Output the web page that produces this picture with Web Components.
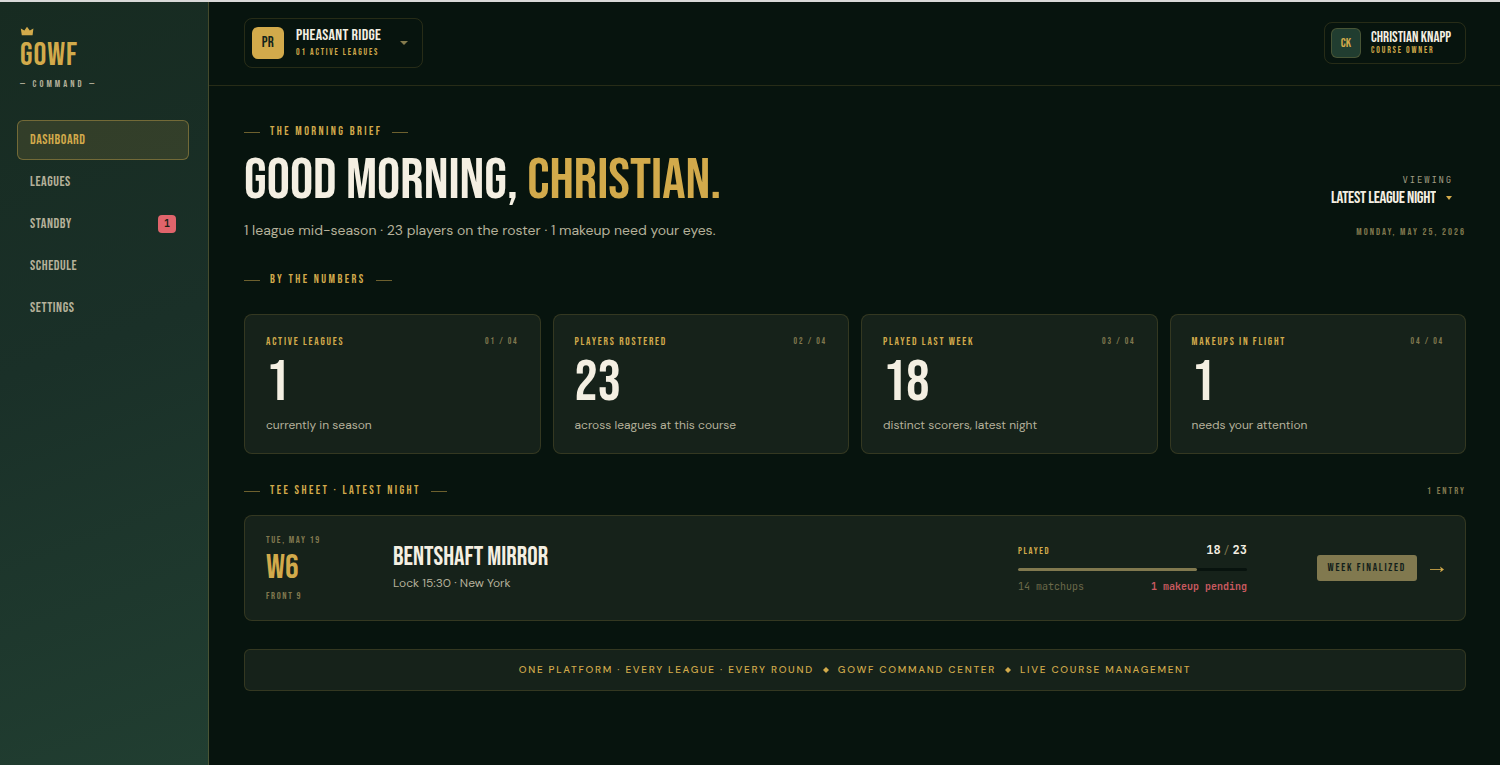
<!DOCTYPE html>
<html lang="en">
<head>
<meta charset="utf-8">
<title>GOWF Command</title>
<style>
  :root {
    --bg: #07140e;
    --panel: #16221a;
    --line: rgba(212, 172, 77, .16);
    --gold: #d2aa4b;
    --cream: #f4efe2;
    --sand: #b5b19a;
    --olive: #81794f;
    --dim: #6d6a4a;
    --rose: #e0646b;
    --display: "Bebas Neue", "Roboto Condensed", "Liberation Sans", sans-serif;
    --text: "DM Sans", Inter, "Liberation Sans", sans-serif;
    --mono: "JetBrains Mono", "Liberation Mono", monospace;
  }
  body { margin: 0; background: var(--bg); color: var(--cream); font-family: var(--display); }
</style>
</head>
<body>
<gowf-app></gowf-app>
<script>
const define = (name, html, setup) => {
  const template = document.createElement('template');
  template.innerHTML = html;
  customElements.define(name, class extends HTMLElement {
    constructor() {
      super();
      this.attachShadow({ mode: 'open' }).append(template.content.cloneNode(true));
    }
    connectedCallback() { if (setup) setup(this, this.shadowRoot); }
  });
};

define('gowf-logo', `
  <style>
    :host { display: block; color: var(--gold); }
    svg { display: block; margin-bottom: 4px; }
    .name { font-size: 32px; line-height: 32px; letter-spacing: .03em; }
    .sub { margin-top: 5px; font-size: 10px; line-height: 14px; letter-spacing: .3em; color: var(--sand); white-space: nowrap; }
  </style>
  <svg width="14" height="10" viewBox="0 0 14 10" aria-hidden="true">
    <path fill="currentColor" d="M.8 2.6 4.4 4.6 7 .8 9.8 4.6 13.4 2.6 12.6 9.2H1.8Z"/>
  </svg>
  <div class="name"><span>GOWF</span></div>
  <div class="sub"><span>— COMMAND —</span></div>`);

define('nav-item', `
  <style>
    :host { display: block; }
    a { box-sizing: border-box; display: flex; align-items: center; justify-content: space-between; height: 40px; padding: 0 12px; border: 1px solid transparent; border-radius: 6px; color: var(--sand); font-size: 14px; line-height: 20px; letter-spacing: .04em; text-decoration: none; }
    :host([current]) a { color: var(--gold); background: rgba(212, 172, 77, .14); border-color: rgba(212, 172, 77, .4); }
  </style>
  <a href="#"><span><slot></slot></span><slot name="badge"></slot></a>`,
  (el, root) => { if (el.hasAttribute('current')) root.querySelector('a').setAttribute('aria-current', 'page'); });

define('count-badge', `
  <style>:host { display: block; min-width: 18px; border-radius: 4px; background: var(--rose); color: #1a2018; text-align: center; font: 700 10px/18px var(--mono); letter-spacing: 0; }</style>
  <slot></slot>`);

define('side-bar', `
  <style>
    :host { display: block; box-sizing: border-box; padding: 24px 19px 24px 17px; border-right: 1px solid rgba(212, 172, 77, .24); background: linear-gradient(160deg, #172b21 0%, #1a3028 45%, #213e31 100%); }
    gowf-logo { margin: 0 0 29px 3px; }
    nav { display: grid; gap: 2px; }
  </style>
  <gowf-logo></gowf-logo>
  <nav aria-label="Main">
    <nav-item current>DASHBOARD</nav-item>
    <nav-item>LEAGUES</nav-item>
    <nav-item>STANDBY<count-badge slot="badge">1</count-badge></nav-item>
    <nav-item>SCHEDULE</nav-item>
    <nav-item>SETTINGS</nav-item>
  </nav>`);

define('id-tile', `
  <style>
    :host { display: grid; place-items: center; box-sizing: border-box; width: 32px; height: 32px; border-radius: 6px; background: var(--gold); color: #14241b; font-size: 15px; line-height: 16px; letter-spacing: .02em; }
    :host([quiet]) { width: 30px; height: 30px; border: 1px solid rgba(212, 172, 77, .22); background: #213d30; color: var(--gold); font-size: 13px; }
  </style>
  <span><slot></slot></span>`);

define('identity-button', `
  <style>
    :host { display: block; }
    button { display: flex; align-items: center; gap: 12px; padding: 7px; border: 1px solid var(--line); border-radius: 8px; background: none; color: var(--cream); font: inherit; text-align: left; cursor: pointer; }
    .who { display: grid; gap: 1px; padding-top: 1px; }
    .name { font-size: 16px; line-height: 18px; letter-spacing: .02em; }
    .role { font-size: 9px; line-height: 14px; letter-spacing: .2em; color: var(--gold); }
    .caret { width: 8px; margin: 0 7px; }
    :host([compact]) button { gap: 10px; padding: 5px 14px 5px 6px; }
    :host([compact]) .who { gap: 0; padding-top: 2px; }
    :host([compact]) .name { font-size: 15px; line-height: 14px; letter-spacing: 0; }
    :host([compact]) .role { line-height: 12px; }
    :host([compact]) .caret { display: none; }
  </style>
  <button type="button">
    <slot name="tile"></slot>
    <span class="who"><span class="name"><slot></slot></span><span class="role"><slot name="role"></slot></span></span>
    <svg class="caret" width="8" height="4" viewBox="0 0 8 4" aria-hidden="true"><path d="M0 0h8L4 4z" fill="#857b4d"/></svg>
  </button>`);

define('top-bar', `
  <style>:host { display: flex; align-items: center; justify-content: space-between; box-sizing: border-box; height: 84px; padding: 0 34px 2px 35px; border-bottom: 1px solid var(--line); }</style>
  <identity-button><id-tile slot="tile">PR</id-tile>PHEASANT RIDGE<span slot="role">01 ACTIVE LEAGUES</span></identity-button>
  <identity-button compact><id-tile slot="tile" quiet>CK</id-tile>CHRISTIAN KNAPP<span slot="role">COURSE OWNER</span></identity-button>`);

define('section-label', `
  <style>
    :host { display: flex; align-items: center; justify-content: space-between; }
    .label { display: flex; align-items: center; gap: 10px; color: var(--gold); font-size: 12px; line-height: 16px; letter-spacing: .2em; }
    .label::before, .label::after { content: ""; width: 16px; height: 1px; background: rgba(212, 172, 77, .5); }
    h2 { margin: 0; font: inherit; }
    .note { color: var(--olive); font-size: 10px; line-height: 16px; letter-spacing: .2em; }
  </style>
  <div class="label"><h2><slot></slot></h2></div><span class="note"><slot name="note"></slot></span>`);

define('night-picker', `
  <style>
    :host { display: flex; flex-direction: column; align-items: flex-end; }
    label { padding-right: 13px; font: 9px/12px var(--mono); letter-spacing: .2em; color: #a19d82; }
    .field { display: flex; align-items: center; gap: 10px; margin: 2px 14px 16px 0; }
    select { appearance: none; height: 20px; margin: 0; padding: 0; border: 0; background: none; color: var(--cream); font: 17px/20px var(--display); letter-spacing: -.02em; cursor: pointer; }
    time { color: var(--olive); font-size: 10px; line-height: 16px; letter-spacing: .2em; }
  </style>
  <label for="night">VIEWING</label>
  <div class="field">
    <select id="night"><option>LATEST LEAGUE NIGHT</option></select>
    <svg width="6" height="4" viewBox="0 0 6 4" aria-hidden="true"><path d="M0 0h6L3 4z" fill="#d2aa4b"/></svg>
  </div>
  <time datetime="2026-05-25">MONDAY, MAY 25, 2026</time>`);

define('hero-head', `
  <style>
    :host { display: flex; align-items: flex-end; justify-content: space-between; }
    h1 { margin: 12px 0 10px; font-size: 58px; line-height: 58px; font-weight: 400; }
    em { font-style: normal; color: var(--gold); }
    p { margin: 0; font: 14px/20px var(--text); color: var(--sand); }
  </style>
  <div>
    <section-label>THE MORNING BRIEF</section-label>
    <h1>GOOD MORNING, <em>CHRISTIAN.</em></h1>
    <p>1 league mid-season · 23 players on the roster · 1 makeup need your eyes.</p>
  </div>
  <night-picker></night-picker>`);

define('stat-card', `
  <style>
    :host { display: block; padding: 19px 21px; border: 1px solid var(--line); border-radius: 8px; background: var(--panel); }
    .top { display: flex; align-items: center; justify-content: space-between; line-height: 16px; }
    .label { color: var(--gold); font-size: 11px; letter-spacing: .16em; }
    .index { color: var(--olive); font-size: 9px; letter-spacing: .2em; }
    .value { margin: 4px 0; font-size: 58px; line-height: 58px; }
    .note { font: 12px/18px var(--text); color: var(--sand); }
  </style>
  <div class="top"><span class="label"><slot name="label"></slot></span><span class="index"><slot name="index"></slot></span></div>
  <div class="value"><slot></slot></div>
  <div class="note"><slot name="note"></slot></div>`);

define('stat-grid', `
  <style>:host { display: grid; grid-template-columns: repeat(4, 1fr); gap: 12px; }</style>
  <stat-card><span slot="label">ACTIVE LEAGUES</span><span slot="index">01 / 04</span>1<span slot="note">currently in season</span></stat-card>
  <stat-card><span slot="label">PLAYERS ROSTERED</span><span slot="index">02 / 04</span>23<span slot="note">across leagues at this course</span></stat-card>
  <stat-card><span slot="label">PLAYED LAST WEEK</span><span slot="index">03 / 04</span>18<span slot="note">distinct scorers, latest night</span></stat-card>
  <stat-card><span slot="label">MAKEUPS IN FLIGHT</span><span slot="index">04 / 04</span>1<span slot="note">needs your attention</span></stat-card>`);

define('played-meter', `
  <style>
    :host { display: grid; gap: 9px; }
    .row { display: flex; align-items: center; justify-content: space-between; }
    .label { color: var(--gold); font-size: 10px; line-height: 16px; letter-spacing: .16em; }
    .score { font: 600 12px/16px var(--mono); }
    i { margin: 0 3px; font: 10px/16px var(--mono); color: var(--olive); }
    .track { height: 3px; border-radius: 2px; background: #08130e; }
    .fill { width: 78%; height: 3px; border-radius: 2px; background: var(--olive); }
    .foot { font: 10px/14px var(--mono); color: var(--dim); }
    b { font-weight: 600; color: #c95a60; }
  </style>
  <div class="row"><span class="label">PLAYED</span><span class="score">18<i>/</i>23</span></div>
  <div class="track" role="progressbar" aria-label="Played" aria-valuenow="18" aria-valuemax="23"><div class="fill"></div></div>
  <div class="row foot"><span>14 matchups</span><b>1 makeup pending</b></div>`);

define('tee-row', `
  <style>
    :host { display: grid; grid-template-columns: 103px 1fr 229px 173px; gap: 24px; align-items: center; padding: 17px 21px; border: 1px solid var(--line); border-radius: 8px; background: var(--panel); }
    .week { display: grid; gap: 4px; }
    .small { color: var(--olive); font-size: 10px; line-height: 14px; letter-spacing: .16em; }
    .num { color: var(--gold); font-size: 34px; line-height: 34px; }
    h3 { margin: 0 0 2px; font-size: 26px; line-height: 28px; font-weight: 400; }
    p { margin: 0; font: 12px/18px var(--text); color: var(--sand); }
    .end { display: flex; align-items: center; justify-content: flex-end; gap: 11px; }
    button { height: 26px; padding: 0 11px; border: 0; border-radius: 3px; background: var(--olive); color: #12201a; font: 11px/16px var(--display); letter-spacing: .16em; cursor: pointer; }
    a { display: block; color: var(--gold); }
    svg { display: block; }
  </style>
  <div class="week"><span class="small">TUE, MAY 19</span><span class="num">W6</span><span class="small">FRONT 9</span></div>
  <div><h3>BENTSHAFT MIRROR</h3><p>Lock 15:30 · New York</p></div>
  <played-meter></played-meter>
  <div class="end">
    <button type="button">WEEK FINALIZED</button>
    <a href="#" aria-label="Open week 6"><svg width="16" height="8" viewBox="0 0 16 8" aria-hidden="true"><path d="M2 5.5h11" stroke="currentColor" opacity=".85"/><path d="M12 2.5 16 5.5 12 8.5 13 5.5z" fill="currentColor"/></svg></a>
  </div>`);

define('tag-line', `
  <style>
    :host { display: flex; align-items: center; justify-content: center; gap: 9px; padding: 11px; border: 1px solid var(--line); border-radius: 6px; background: var(--panel); color: var(--gold); font: 500 10px/18px var(--text); letter-spacing: .17em; }
    svg { display: block; }
  </style>
  <span>ONE PLATFORM · EVERY LEAGUE · EVERY ROUND</span>
  <svg width="6" height="6" viewBox="0 0 6 6" aria-hidden="true"><path d="M3 0 6 3 3 6 0 3z" fill="currentColor"/></svg>
  <span>GOWF COMMAND CENTER</span>
  <svg width="6" height="6" viewBox="0 0 6 6" aria-hidden="true"><path d="M3 0 6 3 3 6 0 3z" fill="currentColor"/></svg>
  <span>LIVE COURSE MANAGEMENT</span>`);

define('gowf-app', `
  <style>
    :host { display: grid; grid-template-columns: 209px 1fr; box-sizing: border-box; min-height: 100vh; border-top: 2px solid #d9d9d8; }
    main { padding: 38px 34px 48px 35px; }
    stat-grid { margin: 26px 0 29px; }
    .numbers { margin-top: 32px; }
    tee-row { margin: 16px 0 28px; }
  </style>
  <side-bar></side-bar>
  <div>
    <top-bar></top-bar>
    <main>
      <hero-head></hero-head>
      <section-label class="numbers">BY THE NUMBERS</section-label>
      <stat-grid></stat-grid>
      <section-label>TEE SHEET · LATEST NIGHT<span slot="note">1 ENTRY</span></section-label>
      <tee-row></tee-row>
      <tag-line></tag-line>
    </main>
  </div>`);
</script>
</body>
</html>
